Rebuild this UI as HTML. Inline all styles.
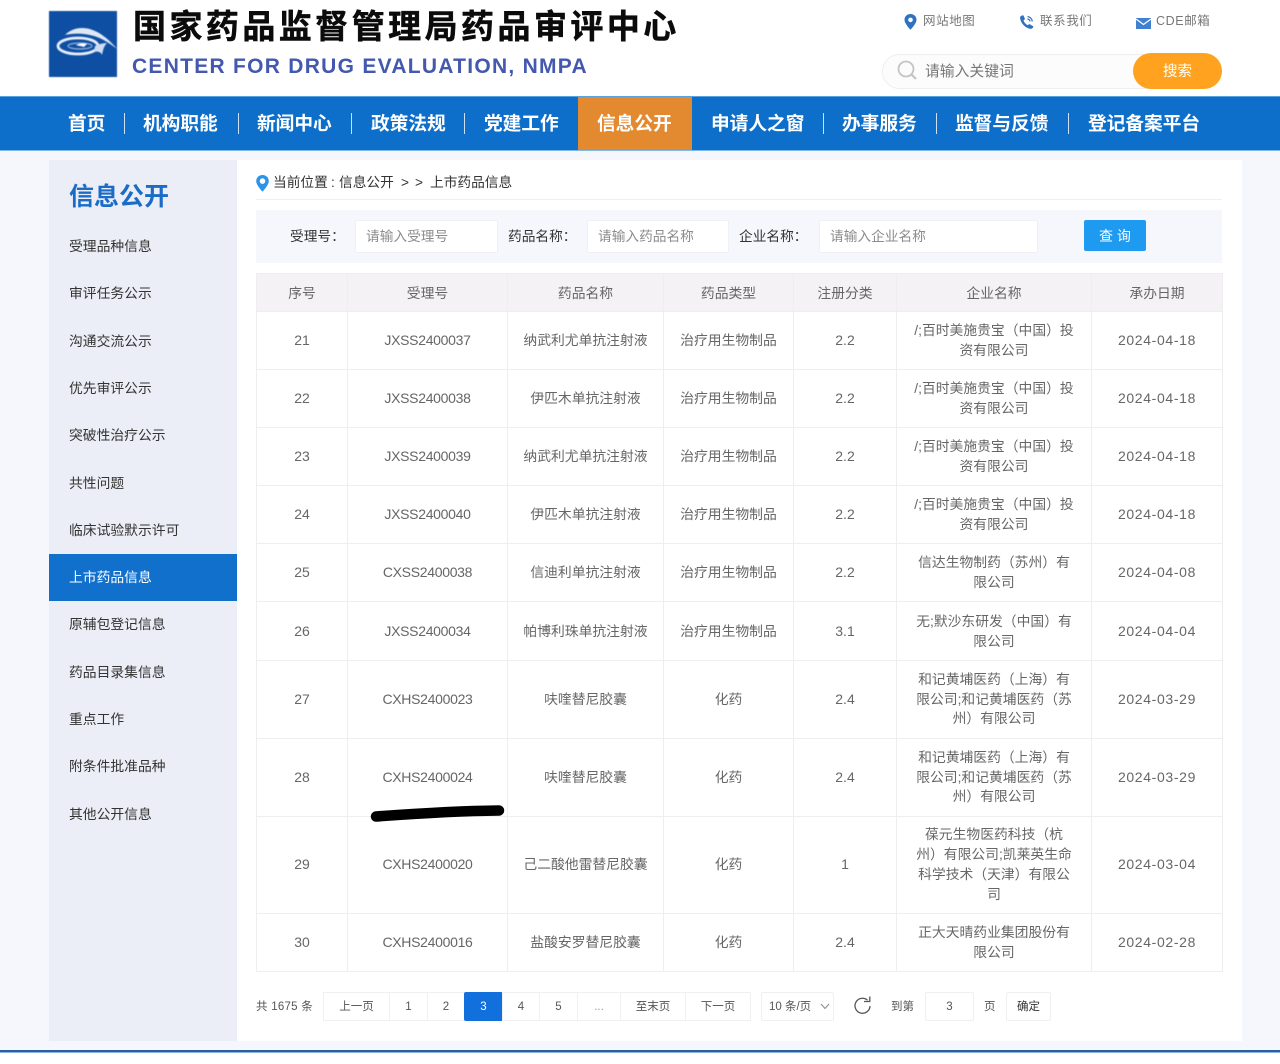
<!DOCTYPE html>
<html lang="zh-CN"><head><meta charset="utf-8"><title>国家药品监督管理局药品审评中心</title>
<style>
*{box-sizing:border-box;margin:0;padding:0}
html,body{width:1280px;height:1064px;overflow:hidden;background:#fff}
body{position:relative;font-family:"Liberation Sans","Noto Sans CJK SC",sans-serif;color:#333}
.a{position:absolute;white-space:nowrap}
.title{left:133px;top:5px;font-size:33px;line-height:44px;font-weight:700;color:#0b0b0b;letter-spacing:3.45px;-webkit-text-stroke:.5px #0b0b0b}
.en{left:132px;top:52px;font-size:21px;line-height:29px;font-weight:700;color:#4358ae;letter-spacing:1.27px}
.tl{top:12px;font-size:12.5px;line-height:18px;color:#777;letter-spacing:.6px}
.nav{left:0;top:96px;width:1280px;height:55px;background:#0e6fcb;border-top:1px solid #5aa3e0;border-bottom:1px solid #7db8ea}
.nt{top:111px;font-size:18.7px;line-height:26px;font-weight:700;color:#fff}
.sep{top:113px;width:1px;height:21px;background:#cfe2f5}
.sm{left:69px;font-size:13.8px;line-height:20px;color:#333}
.lb{top:227px;font-size:13.7px;line-height:20px;color:#333}
.ip{top:220px;height:33px;background:#fff;border:1px solid #eef0f5;border-radius:2px;font-size:13.7px;line-height:31px;color:#8c8c8c;padding-left:10px}
table{position:absolute;left:256px;top:273px;width:966px;border-collapse:collapse;table-layout:fixed;font-size:13.8px;color:#666}
td,th{border:1px solid #f0edf0;text-align:center;font-weight:400;line-height:19.5px;padding:0;overflow:hidden;white-space:nowrap}
th{background:#f5f2f5;color:#666;padding-top:2px}
td.n{font-size:14px}
td.c{font-size:14px;letter-spacing:-.3px}
td.d{font-size:14px;letter-spacing:.65px}
.pg{top:992px;height:29px;background:#fff;border:1px solid #f0f0f2;font-size:11.5px;line-height:29px;color:#555;text-align:center}
.pt{top:998px;font-size:11.5px;line-height:18px;color:#555}
</style></head><body>

<svg class="a" style="left:49px;top:11px;filter:blur(.4px)" width="68" height="66" viewBox="0 0 68 66">
<rect width="68" height="66" fill="#0f4fa3"/>
<path d="M16 24C21 19 27 17 33 17C46 17 58 26 68 38C59 31 52 27 45 25C35 22 25 22 16 24Z" fill="#dfe8f5"/>
<ellipse cx="29" cy="35" rx="20" ry="8" fill="none" stroke="#e8eef8" stroke-width="2.800"/>
<ellipse cx="31" cy="35" rx="12" ry="3" fill="none" stroke="#8fb0de" stroke-width="1.200"/>
<path d="M27 34C31 32 35 32 38 33L35 36C32 35 30 35 27 34Z" fill="#fff"/>
<path d="M46 35C50 33 54 32 58 32C55 35 54 39 53 44C52 41 49 40 45 41Z" fill="#cfdcf0"/>
</svg>
<div class="a title">国家药品监督管理局药品审评中心</div>
<div class="a en">CENTER FOR DRUG EVALUATION, NMPA</div>

<svg class="a" style="left:904px;top:14px" width="13" height="16" viewBox="0 0 13 16"><path fill-rule="evenodd" d="M6.500 0C2.900 0 .5 2.600.5 5.800c0 3.900 6 10 6 10s6-6.100 6-10C12.500 2.600 10.100 0 6.500 0zm0 3.600a2.300 2.300 0 1 1 0 4.600 2.300 2.300 0 0 1 0-4.600z" fill="#2e72c2"/></svg>
<div class="a tl" style="left:923px">网站地图</div>
<svg class="a" style="left:1019px;top:14px" width="16" height="16" viewBox="0 0 16 16"><path d="M1 3.500C1.500 2 3 1 4.500 1.500L6 5 4.500 6.500C5.200 8.500 6.800 10.300 8.800 11.200L10.300 10 14.500 12.500C14.200 14 12.700 15.200 11 14.800 6 13.800 1.500 9 1 3.500Z" fill="#2e72c2"/><path d="M8.500 2.500C11 2.800 13 4.800 13.300 7.500M8.500 5C10 5.200 10.900 6.200 11 7.500" fill="none" stroke="#2e72c2" stroke-width="1.200"/></svg>
<div class="a tl" style="left:1040px">联系我们</div>
<svg class="a" style="left:1136px;top:18px" width="15" height="11" viewBox="0 0 15 11"><rect width="15" height="11" fill="#3f80d0"/><path d="M0 1L7.500 6.500 15 1" fill="none" stroke="#fff" stroke-width="1.300"/></svg>
<div class="a tl" style="left:1156px">CDE邮箱</div>

<div class="a" style="left:882px;top:54px;width:300px;height:35px;background:#fdfcfd;border:1px solid #eeeef0;border-radius:18px"></div>
<svg class="a" style="left:897px;top:60px" width="21" height="20" viewBox="0 0 21 20"><circle cx="9" cy="9" r="7.500" fill="none" stroke="#c4c4c4" stroke-width="1.800"/><path d="M14.500 14.500L19 19" stroke="#c4c4c4" stroke-width="2.200"/></svg>
<div class="a" style="left:925px;top:62px;font-size:14.800px;line-height:21px;color:#777">请输入关键词</div>
<div class="a" style="left:1133px;top:53px;width:89px;height:36px;background:#ffa21f;border-radius:18px;color:#fff;font-size:14.500px;line-height:38px;text-align:center">搜索</div>

<div class="a nav"></div>
<div class="a" style="left:578px;top:97px;width:114px;height:53px;background:#e38a30"></div>
<div class="a nt" style="left:68px">首页</div><div class="a sep" style="left:124px"></div>
<div class="a nt" style="left:143px">机构职能</div><div class="a sep" style="left:238px"></div>
<div class="a nt" style="left:257px">新闻中心</div><div class="a sep" style="left:351px"></div>
<div class="a nt" style="left:371px">政策法规</div><div class="a sep" style="left:464px"></div>
<div class="a nt" style="left:484px">党建工作</div>
<div class="a nt" style="left:597px">信息公开</div>
<div class="a nt" style="left:711px">申请人之窗</div><div class="a sep" style="left:823px"></div>
<div class="a nt" style="left:842px">办事服务</div><div class="a sep" style="left:936px"></div>
<div class="a nt" style="left:955px">监督与反馈</div><div class="a sep" style="left:1068px"></div>
<div class="a nt" style="left:1088px">登记备案平台</div>

<div class="a" style="left:0;top:151px;width:1280px;height:899px;background:#f5f7fd"></div>
<div class="a" style="left:49px;top:160px;width:188px;height:881px;background:#ebeef6"></div>
<div class="a" style="left:237px;top:160px;width:1005px;height:881px;background:#fff"></div>
<div class="a" style="left:0;top:1050px;width:1280px;height:3px;background:#2c5e9c;border-bottom:1px solid #8db4dc"></div>

<div class="a" style="left:69px;top:179px;font-size:25px;line-height:36px;font-weight:700;color:#1a6cc8">信息公开</div>
<div class="a sm" style="top:237px">受理品种信息</div>
<div class="a sm" style="top:284px">审评任务公示</div>
<div class="a sm" style="top:332px">沟通交流公示</div>
<div class="a sm" style="top:379px">优先审评公示</div>
<div class="a sm" style="top:426px">突破性治疗公示</div>
<div class="a sm" style="top:474px">共性问题</div>
<div class="a sm" style="top:521px">临床试验默示许可</div>
<div class="a" style="left:49px;top:554px;width:188px;height:47px;background:#1170cc"></div>
<div class="a sm" style="top:568px;color:#fff">上市药品信息</div>
<div class="a sm" style="top:615px">原辅包登记信息</div>
<div class="a sm" style="top:663px">药品目录集信息</div>
<div class="a sm" style="top:710px">重点工作</div>
<div class="a sm" style="top:757px">附条件批准品种</div>
<div class="a sm" style="top:805px">其他公开信息</div>

<svg class="a" style="left:256px;top:175px" width="13" height="17" viewBox="0 0 13 17"><path fill-rule="evenodd" d="M6.500 0C2.900 0 .2 2.700.2 6.100c0 4 6.300 10.600 6.300 10.600s6.300-6.600 6.300-10.600C12.800 2.700 10.100 0 6.500 0zm0 3.300a2.800 2.800 0 1 1 0 5.600 2.800 2.800 0 0 1 0-5.600z" fill="#2b93e8"/></svg>
<div class="a" style="left:273px;top:173px;font-size:13.700px;line-height:20px;color:#333">当前位置</div>
<div class="a" style="left:331px;top:173px;font-size:13.700px;line-height:20px;color:#333">:</div>
<div class="a" style="left:339px;top:173px;font-size:13.700px;line-height:20px;color:#333">信息公开</div>
<div class="a" style="left:401px;top:173px;font-size:13.700px;line-height:20px;color:#333">&gt;</div>
<div class="a" style="left:415px;top:173px;font-size:13.700px;line-height:20px;color:#333">&gt;</div>
<div class="a" style="left:430px;top:173px;font-size:13.700px;line-height:20px;color:#333">上市药品信息</div>
<div class="a" style="left:256px;top:199px;width:966px;height:1px;background:#f0f0f2"></div>

<div class="a" style="left:256px;top:210px;width:966px;height:53px;background:#f5f7fc"></div>
<div class="a lb" style="left:290px">受理号：</div>
<div class="a ip" style="left:355px;width:143px">请输入受理号</div>
<div class="a lb" style="left:508px">药品名称：</div>
<div class="a ip" style="left:587px;width:142px">请输入药品名称</div>
<div class="a lb" style="left:739px">企业名称：</div>
<div class="a ip" style="left:819px;width:219px">请输入企业名称</div>
<div class="a" style="left:1084px;top:220px;width:62px;height:31px;background:#1e9bf0;border-radius:2px;color:#fff;font-size:14px;line-height:32px;text-align:center">查 询</div>

<table>
<colgroup><col style="width:91px"><col style="width:160px"><col style="width:156px"><col style="width:130px"><col style="width:103px"><col style="width:195px"><col style="width:131px"></colgroup>
<tr style="height:38px"><th>序号</th><th>受理号</th><th>药品名称</th><th>药品类型</th><th>注册分类</th><th>企业名称</th><th>承办日期</th></tr>
<tr style="height:58px"><td class="n">21</td><td class="c">JXSS2400037</td><td>纳武利尤单抗注射液</td><td>治疗用生物制品</td><td class="n">2.2</td><td>/;百时美施贵宝（中国）投<br>资有限公司</td><td class="d">2024-04-18</td></tr>
<tr style="height:58px"><td class="n">22</td><td class="c">JXSS2400038</td><td>伊匹木单抗注射液</td><td>治疗用生物制品</td><td class="n">2.2</td><td>/;百时美施贵宝（中国）投<br>资有限公司</td><td class="d">2024-04-18</td></tr>
<tr style="height:58px"><td class="n">23</td><td class="c">JXSS2400039</td><td>纳武利尤单抗注射液</td><td>治疗用生物制品</td><td class="n">2.2</td><td>/;百时美施贵宝（中国）投<br>资有限公司</td><td class="d">2024-04-18</td></tr>
<tr style="height:58px"><td class="n">24</td><td class="c">JXSS2400040</td><td>伊匹木单抗注射液</td><td>治疗用生物制品</td><td class="n">2.2</td><td>/;百时美施贵宝（中国）投<br>资有限公司</td><td class="d">2024-04-18</td></tr>
<tr style="height:58px"><td class="n">25</td><td class="c">CXSS2400038</td><td>信迪利单抗注射液</td><td>治疗用生物制品</td><td class="n">2.2</td><td>信达生物制药（苏州）有<br>限公司</td><td class="d">2024-04-08</td></tr>
<tr style="height:59px"><td class="n" style="padding-top:1px">26</td><td class="c" style="padding-top:1px">JXSS2400034</td><td style="padding-top:1px">帕博利珠单抗注射液</td><td style="padding-top:1px">治疗用生物制品</td><td class="n" style="padding-top:1px">3.1</td><td style="padding-top:1px">无;默沙东研发（中国）有<br>限公司</td><td class="d" style="padding-top:1px">2024-04-04</td></tr>
<tr style="height:78px"><td class="n">27</td><td class="c">CXHS2400023</td><td>呋喹替尼胶囊</td><td>化药</td><td class="n">2.4</td><td>和记黄埔医药（上海）有<br>限公司;和记黄埔医药（苏<br>州）有限公司</td><td class="d">2024-03-29</td></tr>
<tr style="height:78px"><td class="n">28</td><td class="c">CXHS2400024</td><td>呋喹替尼胶囊</td><td>化药</td><td class="n">2.4</td><td>和记黄埔医药（上海）有<br>限公司;和记黄埔医药（苏<br>州）有限公司</td><td class="d">2024-03-29</td></tr>
<tr style="height:97px"><td class="n">29</td><td class="c">CXHS2400020</td><td>己二酸他雷替尼胶囊</td><td>化药</td><td class="n">1</td><td style="line-height:20px">葆元生物医药科技（杭<br>州）有限公司;凯莱英生命<br>科学技术（天津）有限公<br>司</td><td class="d">2024-03-04</td></tr>
<tr style="height:58px"><td class="n">30</td><td class="c">CXHS2400016</td><td>盐酸安罗替尼胶囊</td><td>化药</td><td class="n">2.4</td><td>正大天晴药业集团股份有<br>限公司</td><td class="d">2024-02-28</td></tr>
</table>

<svg class="a" style="left:365px;top:800px" width="145" height="26" viewBox="0 0 145 26"><path d="M11 16.500C45 14 90 11 134 10.500" fill="none" stroke="#000" stroke-width="10.500" stroke-linecap="round"/></svg>

<div class="a pt" style="left:256px;letter-spacing:.25px">共 1675 条</div>
<div class="a pg" style="left:323px;width:67px">上一页</div>
<div class="a pg" style="left:389px;width:39px">1</div>
<div class="a pg" style="left:427px;width:38px">2</div>
<div class="a pg" style="left:464px;width:39px;background:#1170dc;border-color:#1170dc;color:#fff;border-radius:2px">3</div>
<div class="a pg" style="left:502px;width:38px">4</div>
<div class="a pg" style="left:539px;width:39px">5</div>
<div class="a pg" style="left:577px;width:44px;color:#999">...</div>
<div class="a pg" style="left:620px;width:66px">至末页</div>
<div class="a pg" style="left:685px;width:66px">下一页</div>
<div class="a pg" style="left:761px;width:73px;text-align:left;padding-left:7px;border-radius:2px">10 条/页</div>
<svg class="a" style="left:820px;top:1003px" width="10" height="7" viewBox="0 0 10 7"><path d="M1 1L5 5.500 9 1" fill="none" stroke="#888" stroke-width="1"/></svg>
<svg class="a" style="left:852px;top:995px" width="21" height="22" viewBox="0 0 21 22"><path d="M15.500 5.200A7.500 7.500 0 1 0 18 11" fill="none" stroke="#555" stroke-width="1.300"/><path d="M12 6.500L17.800 6.500 17.800 1.500" fill="none" stroke="#555" stroke-width="1.300"/></svg>
<div class="a pt" style="left:891px">到第</div>
<div class="a pg" style="left:925px;width:49px;border-radius:2px">3</div>
<div class="a pt" style="left:984px">页</div>
<div class="a pg" style="left:1006px;width:45px;border-radius:2px;color:#333">确定</div>
</body></html>
